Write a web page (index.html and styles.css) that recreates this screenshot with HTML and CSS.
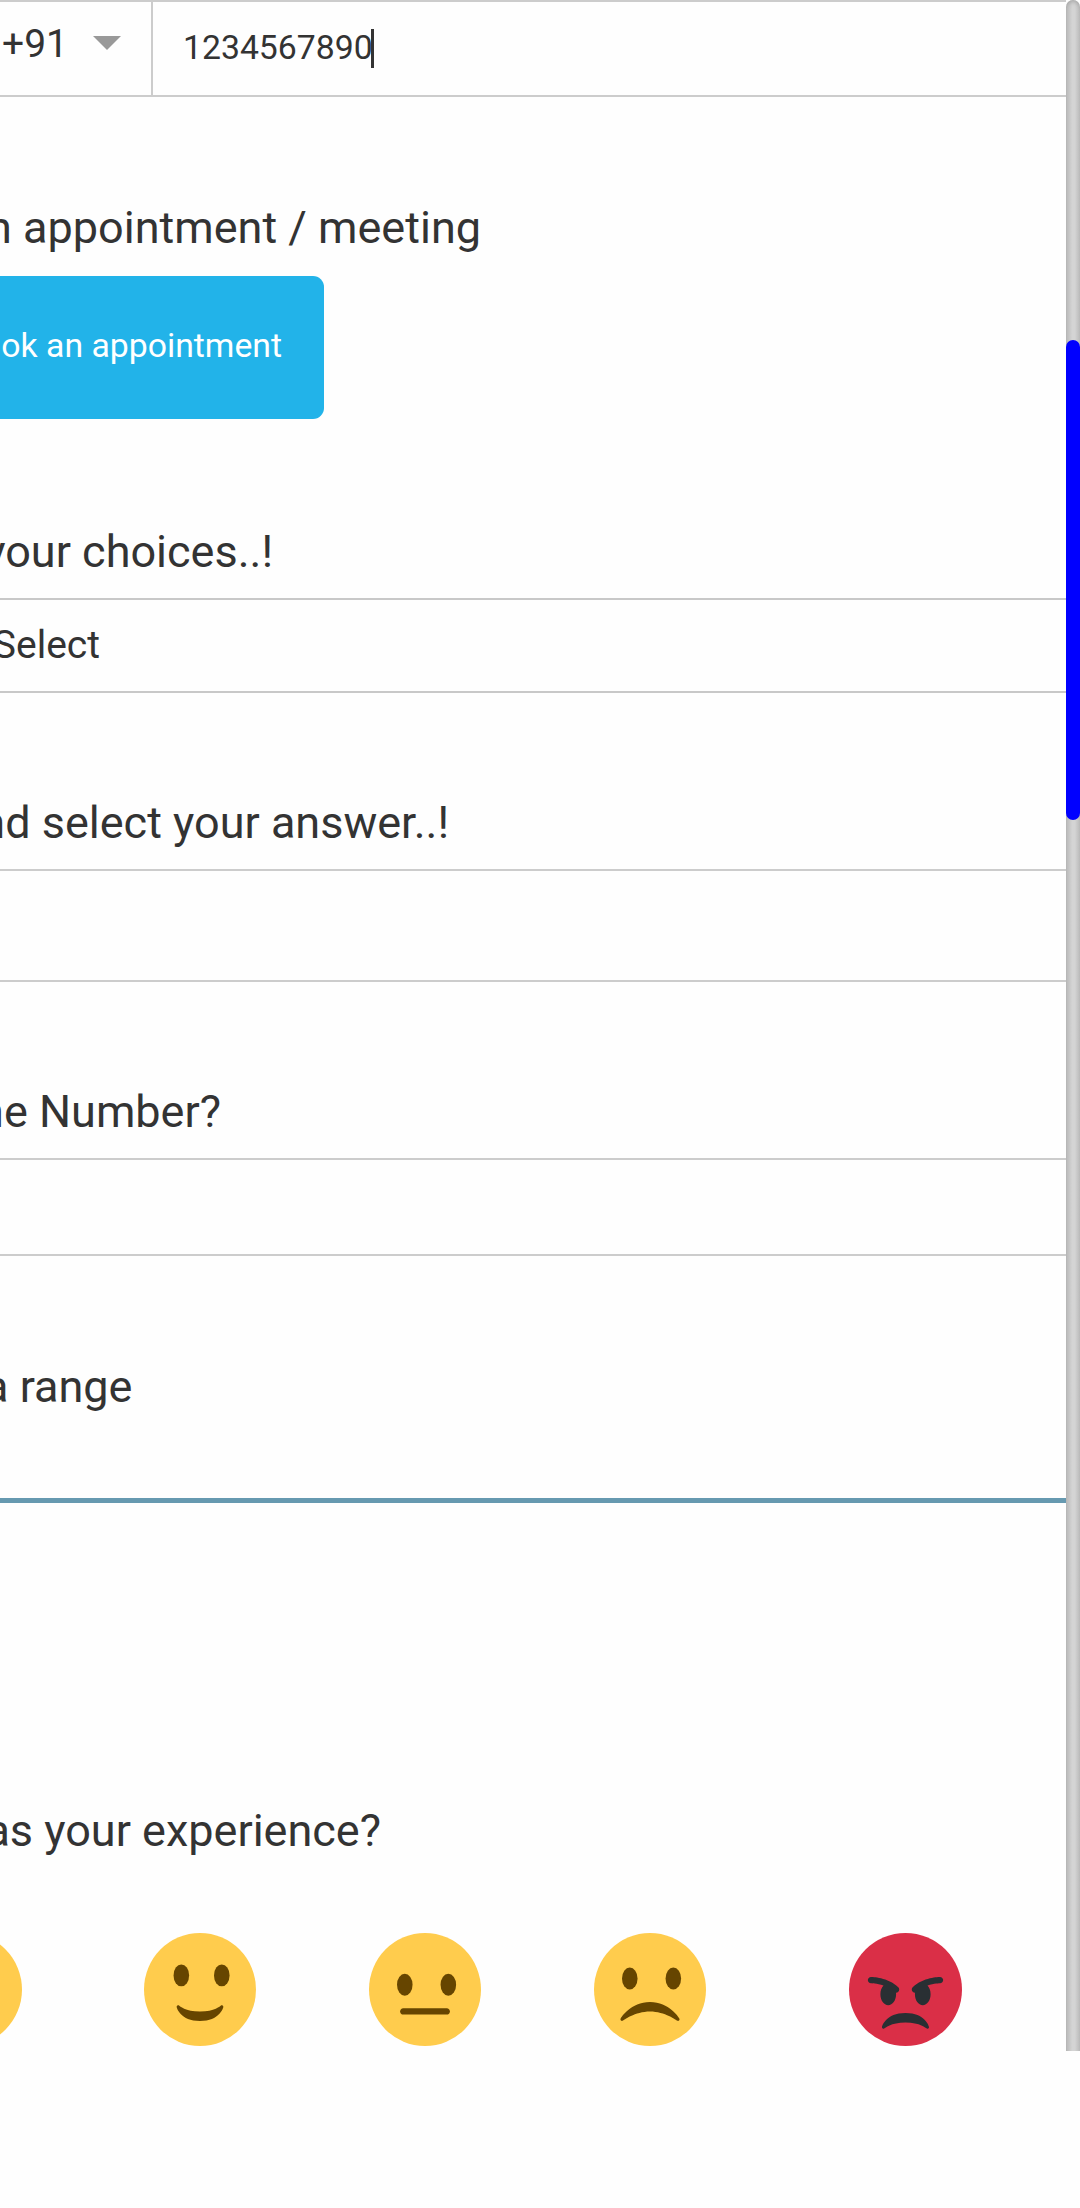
FILE: index.html
```html
<!DOCTYPE html>
<html lang="en">
<head>
<meta charset="utf-8">
<title>Form</title>
<link rel="stylesheet" href="styles.css">
</head>
<body>
<div class="screen">
  <main class="form">
    <div class="phone">
      <div class="phone-code"><span>+91</span><i class="arrow"></i></div>
      <div class="phone-number"><span>1234567890</span><i class="caret"></i></div>
    </div>

    <section class="question question-appointment">
      <h2 class="label label-appointment"><span>n appointment / meeting</span></h2>
      <div class="button"><span>ok an appointment</span></div>
    </section>

    <section class="question question-choices">
      <h2 class="label label-choices"><span>your choices..!</span></h2>
      <div class="field select"><span>Select</span></div>
    </section>

    <section class="question question-answer">
      <h2 class="label label-answer"><span>nd select your answer..!</span></h2>
      <div class="field field-tall"></div>
    </section>

    <section class="question question-number">
      <h2 class="label label-number"><span>ne Number?</span></h2>
      <div class="field field-number"></div>
    </section>

    <section class="question question-range">
      <h2 class="label label-range"><span>a range</span></h2>
      <div class="slider"></div>
    </section>

    <section class="question question-experience">
      <h2 class="label label-experience"><span>as your experience?</span></h2>
      <div class="faces">
        <svg class="face" viewBox="0 0 36 36" preserveAspectRatio="none"><circle fill="#FFCC4D" cx="18" cy="18" r="18"/></svg>
        <svg class="face" viewBox="0 0 36 36" preserveAspectRatio="none">
          <circle fill="#FFCC4D" cx="18" cy="18" r="18"/>
          <g fill="#664500">
            <ellipse cx="12" cy="13.5" rx="2.5" ry="3.5"/>
            <ellipse cx="25" cy="13.5" rx="2.5" ry="3.5"/>
            <path d="M10.515 23.621C10.56 23.8 11.683 28 18 28c6.318 0 7.44-4.2 7.485-4.379.055-.217-.043-.442-.237-.554-.195-.111-.439-.078-.6.077C24.629 23.163 22.694 25 18 25s-6.63-1.837-6.648-1.855C11.256 23.05 11.128 23 11 23c-.084 0-.169.021-.246.064-.196.112-.294.339-.239.557z"/>
          </g>
        </svg>
        <svg class="face" viewBox="0 0 36 36" preserveAspectRatio="none">
          <circle fill="#FFCC4D" cx="18" cy="18" r="18"/>
          <g fill="#664500">
            <ellipse cx="11.5" cy="16.5" rx="2.5" ry="3.5"/>
            <ellipse cx="25.5" cy="16.5" rx="2.5" ry="3.5"/>
            <path d="M25 26H11c-.552 0-1-.447-1-1s.448-1 1-1h14c.553 0 1 .447 1 1s-.447 1-1 1z"/>
          </g>
        </svg>
        <svg class="face" viewBox="0 0 36 36" preserveAspectRatio="none">
          <circle fill="#FFCC4D" cx="18" cy="18" r="18"/>
          <g fill="#664500">
            <ellipse cx="11.5" cy="14.5" rx="2.5" ry="3.5"/>
            <ellipse cx="25.5" cy="14.5" rx="2.5" ry="3.5"/>
            <path d="M8.665 27.871c.178.161.444.171.635.029.039-.029 3.922-2.9 8.7-2.9 4.766 0 8.662 2.871 8.7 2.9.191.142.457.13.635-.029.177-.16.217-.424.094-.628C27.3 27.029 24.212 22 18 22s-9.301 5.028-9.429 5.243c-.123.205-.084.468.094.628z"/>
          </g>
        </svg>
        <svg class="face face-angry" viewBox="0 0 36 36" preserveAspectRatio="none">
          <circle fill="#DA2F47" cx="18" cy="18" r="18"/>
          <path fill="#292F33" d="M25.485 29.879C25.44 29.7 24.317 25.5 18 25.5c-6.318 0-7.44 4.2-7.485 4.379-.055.217.043.442.237.554.195.109.439.079.6-.077.019-.019 1.954-1.856 6.648-1.856s6.63 1.837 6.648 1.855c.096.095.224.145.352.145.084 0 .169-.021.246-.064.196-.112.294-.339.239-.557zm-9.778-12.586C12.452 14.038 7.221 14 7 14c-.552 0-.999.447-.999.998-.001.552.446 1 .998 1.002.029 0 1.925.022 3.983.737-.593.64-.982 1.634-.982 2.763 0 1.934 1.119 3.5 2.5 3.5s2.5-1.566 2.5-3.5c0-.174-.019-.34-.037-.507.013 0 .025.007.037.007.256 0 .512-.098.707-.293.391-.391.391-1.023 0-1.414zM29 14c-.221 0-5.451.038-8.707 3.293-.391.391-.391 1.023 0 1.414.195.195.451.293.707.293.013 0 .024-.007.036-.007-.016.167-.036.333-.036.507 0 1.934 1.119 3.5 2.5 3.5s2.5-1.566 2.5-3.5c0-1.129-.389-2.123-.982-2.763 2.058-.715 3.954-.737 3.984-.737.551-.002.998-.45.997-1.002-.001-.551-.447-.998-.999-.998z"/>
        </svg>
      </div>
    </section>
  </main>
  <div class="scrollbar"><div class="thumb"></div></div>
</div>
</body>
</html>
```

FILE: styles.css
```css
* { box-sizing: border-box; }

body {
  margin: 0;
  height: 2208px;
  overflow: hidden;
  background: #fefefe;
  color: #333;
  font-family: Roboto, sans-serif;
}

.screen {
  display: flex;
  height: 2051px;
}

.form {
  width: 1066px;
  overflow: hidden;
}

.phone {
  display: flex;
  height: 97px;
  border-top: 2px solid #ccc;
  border-bottom: 2px solid #ccc;
}

.phone-code {
  display: flex;
  align-items: flex-start;
  width: 153px;
  padding: 19px 0 0 2px;
  border-right: 2px solid #ccc;
  font-size: 39px;
  line-height: 46px;
}

.phone-code span { width: 91px; }

.arrow {
  margin-top: 15px;
  border: 14px solid transparent;
  border-top-color: #999;
  border-bottom-width: 0;
}

.phone-number {
  display: flex;
  padding: 26px 0 0 30px;
  font-size: 33.75px;
  line-height: 40px;
}

.phone-number span { width: 188px; }

.caret {
  width: 3px;
  height: 39px;
  margin-top: 1px;
  background: #333;
}

/* The form is scrolled sideways, so labels run off the left edge. */
.label {
  display: flex;
  justify-content: flex-end;
  margin: 0 0 20px;
  font-size: 45px;
  font-weight: 400;
  line-height: 53px;
  white-space: nowrap;
}

.question-appointment { padding-top: 104px; }
.label-appointment { width: 481px; margin-bottom: 22px; }
.question-choices { padding-top: 106px; }
.label-choices { width: 273px; }
.question-answer { padding-top: 103px; }
.label-answer { width: 449px; }
.question-number { padding-top: 103px; }
.label-number { width: 221px; }
.question-range { padding-top: 104px; }
.label-range { width: 132.5px; margin-bottom: 85px; }
.question-experience { padding-top: 301px; }
.label-experience { width: 381px; margin-bottom: 76px; }

.button {
  display: flex;
  align-items: center;
  justify-content: flex-end;
  width: 324px;
  height: 143px;
  padding: 0 42px 4px 0;
  border-radius: 0 11px 11px 0;
  background: #22b3e9;
  color: #fff;
  font-size: 33.75px;
  white-space: nowrap;
}

.field {
  border-top: 2px solid #ccc;
  border-bottom: 2px solid #ccc;
}

.select {
  display: flex;
  justify-content: flex-end;
  width: 1066px;
  height: 95px;
  padding: 22px 966px 0 0;
  border-color: #c8c8c8;
  font-size: 39px;
  line-height: 46px;
}

.field-tall { height: 113px; }
.field-number { height: 98px; }

.slider {
  height: 5px;
  background: #6699b0;
}

.faces {
  display: flex;
  gap: 113px;
  margin-left: -90px;
}

.face {
  flex: none;
  width: 112px;
  height: 113px;
}

.face:first-child { margin-right: 9px; }

.face-angry {
  width: 113px;
  margin-left: 30px;
}

.scrollbar {
  width: 14px;
  height: 2051px;
  padding-top: 340px;
  border-radius: 7px 7px 0 0;
  background: linear-gradient(90deg, #bababa, #c8c8c8 25%, #d4d4d4 45%, #d4d4d4 62%, #cacaca 80%, #bebebe);
  box-shadow: inset 0 3px 5px -2px #a0a0a0;
}

.thumb {
  height: 480px;
  border-radius: 7px;
  background: #00f;
}
```
